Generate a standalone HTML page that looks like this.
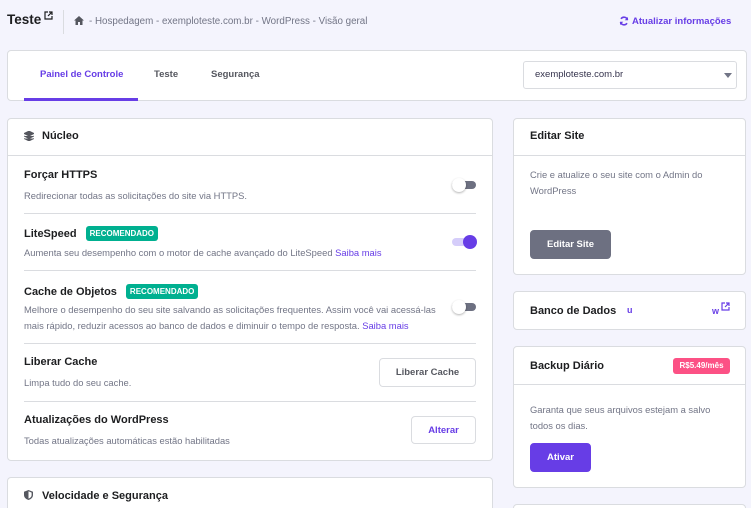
<!DOCTYPE html>
<html><head><meta charset="utf-8"><style>
*{margin:0;padding:0;box-sizing:border-box}
html,body{width:751px;height:508px;overflow:hidden}
body{background:#f4f4fd;font-family:"Liberation Sans",sans-serif;color:#1d1e20;position:relative}
.a{position:absolute;white-space:nowrap}
.card{position:absolute;background:#fff;border:1px solid #dadce0;border-radius:4px}
.t{font-size:11px;font-weight:bold;color:#1d1e20}
.d{font-size:9.4px;color:#727586}
.hr{position:absolute;height:1px;background:#dadce0}
.badge{display:inline-block;background:#00b090;color:#fff;font-size:8px;font-weight:bold;padding:3px 4px;border-radius:3px;margin-left:9px;vertical-align:1px}
.tg{position:absolute;width:24px;height:8px;border-radius:4px;background:#6d7081}
.tg i{position:absolute;top:-3px;width:14px;height:14px;border-radius:50%;background:#fff;box-shadow:0 1px 2px rgba(0,0,0,.3)}
.btn{position:absolute;border:1px solid #dadce0;border-radius:4px;font-size:9.5px;font-weight:bold;display:flex;align-items:center;justify-content:center;background:#fff}
.lnk{color:#673de6}
</style></head><body>
<div class="a" style="left:7px;top:12px;font-size:13.5px;font-weight:bold">Teste</div>
<svg class="a" style="left:44px;top:11px" width="9" height="9" viewBox="0 0 9 9"><path d="M4 1H1v7h7V5M5 1h3v3M8 1L4 5" fill="none" stroke="#1d1e20" stroke-width="1.2"/></svg>
<div class="a" style="left:63px;top:10px;width:1px;height:24px;background:#dadce0"></div>
<svg class="a" style="left:74px;top:16px" width="10" height="9" viewBox="0 0 10 9"><path d="M5 0L0 4.5h1.5V9h2.5V6h2v3h2.5V4.5H10z" fill="#55575f"/></svg>
<div class="a" style="left:89px;top:16px;font-size:9.8px;color:#727586">- Hospedagem - exemploteste.com.br - WordPress - Visão geral</div>
<svg class="a" style="left:619px;top:16px" width="10" height="10" viewBox="0 0 10 10"><path d="M8.5 4A3.6 3.6 0 0 0 2 2.8M1.5 6A3.6 3.6 0 0 0 8 7.2" fill="none" stroke="#673de6" stroke-width="1.6"/><path d="M9 1v3.3H5.7zM1 9V5.7h3.3z" fill="#673de6"/></svg>
<div class="a lnk" style="left:632px;top:16px;font-size:9.5px;font-weight:bold">Atualizar informações</div>

<div class="card" style="left:7px;top:50px;width:740px;height:51px"></div>
<div class="a lnk" style="left:40px;top:69px;font-size:9.5px;font-weight:bold">Painel de Controle</div>
<div class="a" style="left:24px;top:98px;width:114px;height:3px;background:#673de6"></div>
<div class="a" style="left:154px;top:69px;font-size:9.5px;font-weight:bold;color:#55575f">Teste</div>
<div class="a" style="left:211px;top:69px;font-size:9.5px;font-weight:bold;color:#55575f">Segurança</div>
<div class="card" style="left:523px;top:61px;width:214px;height:28px;border-radius:3px"></div>
<div class="a" style="left:535px;top:69px;font-size:9.5px;color:#36344d">exemploteste.com.br</div>
<div class="a" style="left:724px;top:73px;border-left:4px solid transparent;border-right:4px solid transparent;border-top:5px solid #727586"></div>

<div class="card" style="left:7px;top:118px;width:486px;height:343px"></div>
<svg class="a" style="left:24px;top:131px" width="10" height="10" viewBox="0 0 10 10"><path d="M5 0L0 2.5 5 5l5-2.5zM0 5l5 2.5L10 5M0 7.5L5 10l5-2.5" fill="#55575f" stroke="#55575f" stroke-width="0.8"/></svg>
<div class="a t" style="left:42px;top:130px">Núcleo</div>
<div class="hr" style="left:8px;top:155px;width:484px"></div>

<div class="a t" style="left:24px;top:169px">Forçar HTTPS</div>
<div class="a d" style="left:24px;top:190px">Redirecionar todas as solicitações do site via HTTPS.</div>
<div class="tg" style="left:452px;top:181px"><i style="left:0"></i></div>
<div class="hr" style="left:24px;top:213px;width:452px"></div>

<div class="a t" style="left:24px;top:226px">LiteSpeed<span class="badge">RECOMENDADO</span></div>
<div class="a d" style="left:24px;top:247px">Aumenta seu desempenho com o motor de cache avançado do LiteSpeed <span class="lnk">Saiba mais</span></div>
<div class="tg" style="left:452px;top:238px;background:#d5cdfa"><i style="left:11px;background:#673de6;box-shadow:none"></i></div>
<div class="hr" style="left:24px;top:270px;width:452px"></div>

<div class="a t" style="left:24px;top:284px">Cache de Objetos<span class="badge">RECOMENDADO</span></div>
<div class="a d" style="left:24px;top:304px">Melhore o desempenho do seu site salvando as solicitações frequentes. Assim você vai acessá-las</div>
<div class="a d" style="left:24px;top:320px">mais rápido, reduzir acessos ao banco de dados e diminuir o tempo de resposta. <span class="lnk">Saiba mais</span></div>
<div class="tg" style="left:452px;top:303px"><i style="left:0"></i></div>
<div class="hr" style="left:24px;top:343px;width:452px"></div>

<div class="a t" style="left:24px;top:356px">Liberar Cache</div>
<div class="a d" style="left:24px;top:377px">Limpa tudo do seu cache.</div>
<div class="btn" style="left:379px;top:358px;width:97px;height:29px;color:#55575f">Liberar Cache</div>
<div class="hr" style="left:24px;top:401px;width:452px"></div>

<div class="a t" style="left:24px;top:414px">Atualizações do WordPress</div>
<div class="a d" style="left:24px;top:435px">Todas atualizações automáticas estão habilitadas</div>
<div class="btn lnk" style="left:411px;top:416px;width:65px;height:28px">Alterar</div>

<div class="card" style="left:7px;top:477px;width:486px;height:31px;border-bottom:none;border-radius:4px 4px 0 0"></div>
<svg class="a" style="left:24px;top:490px" width="9" height="10" viewBox="0 0 9 10"><path d="M4.5 0L0 1.7V5c0 2.5 2 4.3 4.5 5 2.5-.7 4.5-2.5 4.5-5V1.7z" fill="#55575f"/><path d="M4.5 1.3V8.6C6.3 8 7.6 6.7 7.6 5V2.6z" fill="#fff"/></svg>
<div class="a t" style="left:42px;top:490px">Velocidade e Segurança</div>

<div class="card" style="left:513px;top:118px;width:233px;height:157px"></div>
<div class="a t" style="left:530px;top:130px">Editar Site</div>
<div class="hr" style="left:514px;top:155px;width:231px"></div>
<div class="a d" style="left:530px;top:169px">Crie e atualize o seu site com o Admin do</div>
<div class="a d" style="left:530px;top:185px">WordPress</div>
<div class="btn" style="left:530px;top:230px;width:81px;height:29px;background:#6d7081;border-color:#6d7081;color:#fff">Editar Site</div>

<div class="card" style="left:513px;top:291px;width:233px;height:39px"></div>
<div class="a t" style="left:530px;top:305px">Banco de Dados</div>
<div class="a lnk" style="left:627px;top:305px;font-size:9px;font-weight:bold">u</div>
<div class="a lnk" style="left:712px;top:306px;font-size:9px;font-weight:bold">w</div>
<svg class="a" style="left:721px;top:302px" width="9" height="9" viewBox="0 0 9 9"><path d="M4 1H1v7h7V5M5 1h3v3M8 1L4 5" fill="none" stroke="#673de6" stroke-width="1.2"/></svg>

<div class="card" style="left:513px;top:346px;width:233px;height:142px"></div>
<div class="a t" style="left:530px;top:360px">Backup Diário</div>
<div class="a" style="left:673px;top:358px;width:57px;height:16px;background:#fc5185;border-radius:3px;color:#fff;font-size:8px;font-weight:bold;text-align:center;line-height:16px">R$5.49/mês</div>
<div class="hr" style="left:514px;top:384px;width:231px"></div>
<div class="a d" style="left:530px;top:404px">Garanta que seus arquivos estejam a salvo</div>
<div class="a d" style="left:530px;top:420px">todos os dias.</div>
<div class="btn" style="left:530px;top:443px;width:61px;height:29px;background:#673de6;border-color:#673de6;color:#fff">Ativar</div>

<div class="card" style="left:513px;top:504px;width:233px;height:4px;border-bottom:none;border-radius:4px 4px 0 0"></div>
</body></html>
